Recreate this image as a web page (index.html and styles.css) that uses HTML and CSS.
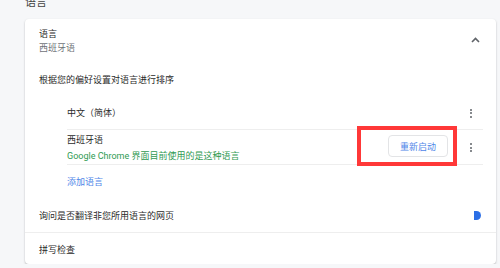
FILE: index.html
```html
<!DOCTYPE html>
<html lang="zh-CN">
<head>
    <meta charset="UTF-8" />
    <meta name="viewport" content="width=device-width, initial-scale=1.0" />
    <title>语言</title>
    <link rel="stylesheet" href="styles.css">
</head>
<body>
  <div class="pagina">
    <h2 class="titulo">语言</h2>

    <div class="cartao">
      <div class="cabecalho">
        <div>
          <div class="texto">语言</div>
          <div class="texto cinza">西班牙语</div>
        </div>
        <svg class="seta" width="9" height="6" viewBox="0 0 9 6">
          <polyline points="1,5 4.5,1.5 8,5" fill="none" stroke="#5f6368" stroke-width="1.6" />
        </svg>
      </div>

      <div class="ordem texto">根据您的偏好设置对语言进行排序</div>

      <div class="lista">
        <div class="item item-simples">
          <span class="texto">中文（简体）</span>
          <span class="menu"><i></i><i></i><i></i></span>
        </div>
        <div class="item item-duplo">
          <div class="info">
            <div class="texto">西班牙语</div>
            <div class="texto verde">Google Chrome 界面目前使用的是这种语言</div>
          </div>
          <button class="reiniciar" type="button">重新启动</button>
          <span class="menu"><i></i><i></i><i></i></span>
        </div>
        <div class="adicionar texto azul">添加语言</div>
      </div>

      <div class="linha traduzir">
        <span class="texto">询问是否翻译非您所用语言的网页</span>
        <span class="chave"></span>
      </div>
      <div class="linha ortografia">
        <span class="texto">拼写检查</span>
      </div>
    </div>
  </div>

  <div class="marcacao"></div>
</body>
</html>
```

FILE: styles.css
```css
body {
    margin: 0;
    background: #f6f7f9;
    font-family: Roboto, "Noto Sans CJK SC", sans-serif;
    color: #2a2a2a;
}

.pagina {
    padding: 0 4px 0 25px;
}

.titulo {
    margin: -4px 0 0 0;
    height: 23px;
    font-size: 11px;
    font-weight: normal;
    line-height: 14px;
    color: #444;
}

.cartao {
    background: #fff;
    border-radius: 4px;
    box-shadow: 0 1px 2px rgba(60, 64, 67, 0.35);
    height: 245px;
}

.texto {
    font-size: 9px;
    line-height: 14px;
    white-space: nowrap;
}

.cinza {
    color: #6f7378;
}

.verde {
    color: #2f9a52;
}

.azul {
    color: #4f86e8;
}

.cabecalho {
    display: flex;
    justify-content: space-between;
    align-items: center;
    padding: 8px 16px 0 14px;
}

.seta {
    margin-bottom: 2px;
}

.ordem {
    padding: 18px 0 0 14px;
}

.lista {
    margin: 10px 13px 0 42px;
}

.item {
    display: flex;
    align-items: center;
    border-bottom: 1px solid #eeeeee;
}

.item-simples {
    height: 32px;
}

.item-duplo {
    height: 34px;
    align-items: flex-start;
}

.item-duplo .texto {
    line-height: 16px;
}

.info {
    flex: 1;
    padding-top: 2px;
}

.menu {
    margin-left: auto;
    margin-right: 11px;
    width: 3px;
    display: flex;
    flex-direction: column;
    align-items: center;
    gap: 1.5px;
}

.item-duplo .menu {
    margin-left: 0;
    margin-top: 13px;
}

.menu i {
    display: block;
    width: 2px;
    height: 2px;
    border-radius: 50%;
    background: #5f6368;
}

.reiniciar {
    margin: 5px 21px 0 0;
    width: 60px;
    height: 22px;
    background: #fff;
    border: 1px solid #e3e4e6;
    border-radius: 4px;
    color: #4f86e8;
    font-family: Roboto, "Noto Sans CJK SC", sans-serif;
    font-size: 9px;
    padding: 0;
}

.adicionar {
    display: flex;
    align-items: center;
    height: 34px;
}

.linha {
    display: flex;
    align-items: center;
    justify-content: space-between;
    padding: 0 14px;
}

.traduzir {
    height: 33px;
    border-bottom: 1px solid #eeeeee;
}

.ortografia {
    height: 33px;
}

.chave {
    width: 7px;
    height: 9px;
    border-radius: 0 5px 5px 0;
    background: #2c6fe6;
    margin-right: 1px;
}

.marcacao {
    position: absolute;
    left: 357px;
    top: 126px;
    width: 92px;
    height: 32px;
    border: 4px solid #ff3838;
}
```
